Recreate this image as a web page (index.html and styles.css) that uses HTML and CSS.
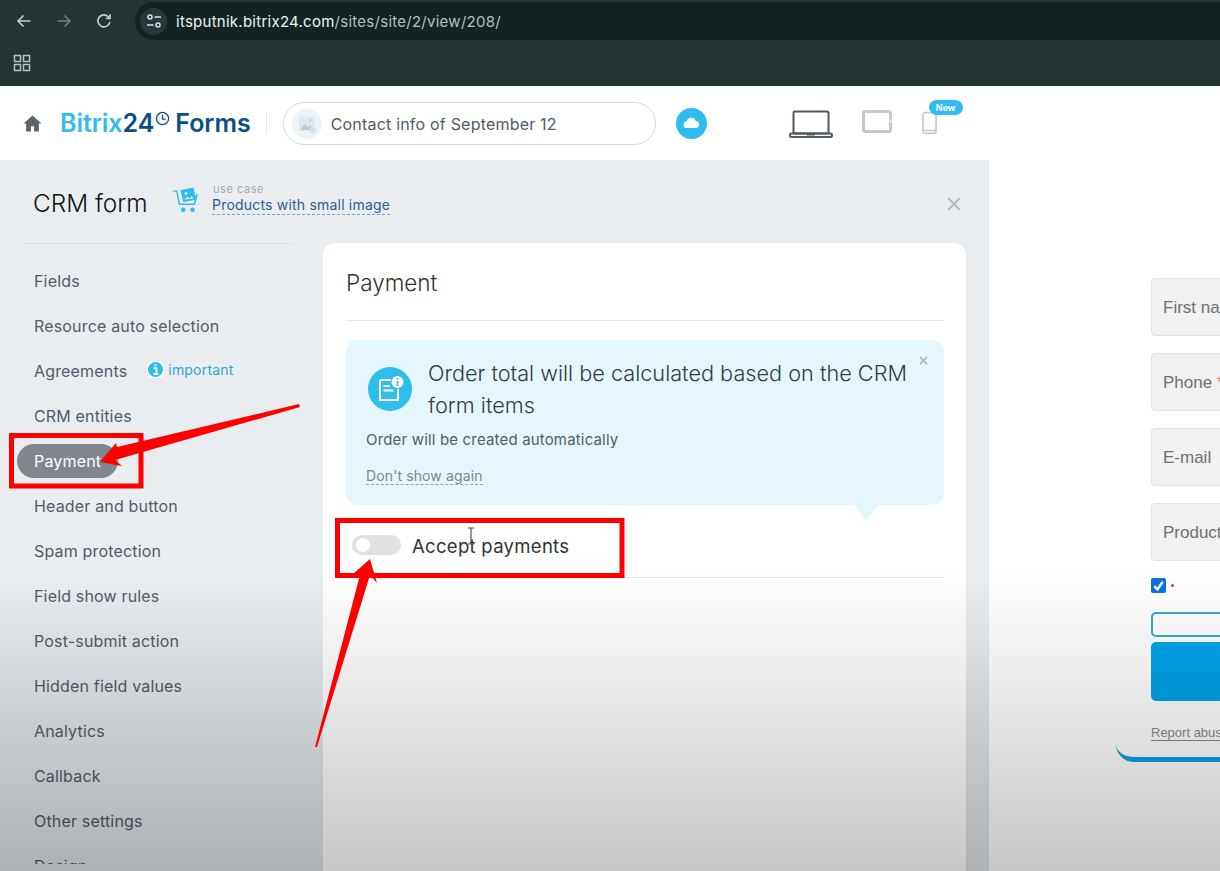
FILE: index.html
```html
<!DOCTYPE html>
<html lang="en">
<head>
<meta charset="utf-8">
<title>Bitrix24 Forms</title>
<link rel="stylesheet" href="styles.css">
</head>
<body>
<div class="page">
  <div class="browser">
    <div class="toolbar">
      <svg class="nav-icon" viewBox="0 0 18 18"><path d="M15.5 9H3M8.5 3.5 3 9l5.5 5.5"/></svg>
      <svg class="nav-icon dim" viewBox="0 0 18 18"><path d="M2.5 9H15M9.500 3.500 15 9l-5.500 5.500"/></svg>
      <svg class="nav-icon reload" viewBox="0 0 18 18"><path d="M14.800 9.800A6 6 0 1 1 13.300 4.800L15 6.500M15 2.300v4.200h-4.200"/></svg>
      <div class="omnibox">
        <span class="tune"><svg viewBox="0 0 18 18"><circle cx="5" cy="5" r="2"/><path d="M9.500 5H16M2 13h6.500"/><circle cx="13" cy="13" r="2"/></svg></span>
        <span class="url">itsputnik.bitrix24.com<span class="url-path">/sites/site/2/view/208/</span></span>
      </div>
    </div>
    <div class="bookmarks">
      <svg class="apps" viewBox="0 0 18 18"><rect x="1.500" y="1.500" width="6" height="6"/><rect x="10.500" y="1.500" width="6" height="6"/><rect x="1.500" y="10.500" width="6" height="6"/><rect x="10.500" y="10.500" width="6" height="6"/></svg>
    </div>
  </div>

  <header class="topbar">
    <svg class="home" viewBox="0 0 18 18"><path d="M9 1.500 0.500 9H3v7.500h4.500v-5h3v5H15V9h2.500z"/></svg>
    <div class="logo"><span class="logo-a">Bitrix</span><span class="logo-b">24</span><svg class="logo-clock" viewBox="0 0 14 14"><circle cx="7" cy="7" r="5.700"/><path d="M7 3.500V7.500h3"/></svg><span class="logo-b logo-forms">Forms</span></div>
    <span class="sep"></span>
    <div class="name-pill">
      <span class="thumb"><svg viewBox="0 0 20 20"><rect x="2" y="2" width="15" height="15" fill="#dde9ee"/><path d="M3 16l5-6 3 3 2-2 4 5z" fill="#bccbd2"/><circle cx="13" cy="6" r="1.200" fill="#bccbd2"/><circle cx="16" cy="16" r="3" fill="#cfe0e6"/></svg></span>
      <span>Contact info of September 12</span>
    </div>
    <span class="cloud"><svg viewBox="0 0 20 14"><path d="M5 13a4 4 0 0 1-.5-8A5.500 5.500 0 0 1 15 4.500 4.300 4.300 0 0 1 15.500 13z"/></svg></span>
    <div class="devices">
      <svg class="laptop" viewBox="0 0 44 28"><rect x="4.500" y="1.500" width="35" height="22" rx="1.500"/><rect x="1" y="23.500" width="42" height="3.500" rx="1.500"/><path d="M18 24.500h8" /></svg>
      <svg class="tablet" viewBox="0 0 30 23"><rect x="1.500" y="1.500" width="27" height="20" rx="1.500"/><circle cx="28.500" cy="11.500" r="1" class="solid"/></svg>
      <span class="phone-wrap">
        <svg class="phone" viewBox="0 0 16 24"><rect x="1" y="1" width="14" height="22" rx="2"/><path d="M1 20h14"/></svg>
        <span class="new-badge">New</span>
      </span>
    </div>
  </header>

  <main class="workspace">
    <section class="editor">
      <div class="editor-head">
        <h1 class="editor-title">CRM form</h1>
        <svg class="cart" viewBox="0 0 30 28"><path d="M1 4h4l3 14h16l3-11" class="cart-line"/><path d="M9 3l14-3 3 13-14 3z" class="cart-fill"/><circle cx="12" cy="24" r="2.500" class="cart-fill"/><circle cx="22" cy="24" r="2.500" class="cart-fill"/><path d="M13 13l4-3 2 2 2-3 2 3z" fill="#e9edf0"/><circle cx="15" cy="6.500" r="1.500" fill="#e9edf0"/></svg>
        <div class="use-case">
          <span class="use-case-label">use case</span>
          <span class="use-case-link">Products with small image</span>
        </div>
        <svg class="close" viewBox="0 0 14 14"><path d="M1 1l12 12M13 1 1 13"/></svg>
      </div>
      <div class="editor-body">
        <nav class="menu">
          <div class="menu-item">Fields</div>
          <div class="menu-item">Resource auto selection</div>
          <div class="menu-item">Agreements
            <span class="important"><svg viewBox="0 0 18 18"><circle cx="9" cy="9" r="9"/><path d="M7 7.500h3v6M7 13.800h5M8 4.500h2"/></svg>important</span>
          </div>
          <div class="menu-item">CRM entities</div>
          <div class="menu-item"><span class="menu-active">Payment</span></div>
          <div class="menu-item">Header and button</div>
          <div class="menu-item">Spam protection</div>
          <div class="menu-item">Field show rules</div>
          <div class="menu-item">Post-submit action</div>
          <div class="menu-item">Hidden field values</div>
          <div class="menu-item">Analytics</div>
          <div class="menu-item">Callback</div>
          <div class="menu-item">Other settings</div>
          <div class="menu-item">Design</div>
        </nav>
        <section class="card">
          <h2 class="card-title">Payment</h2>
          <div class="notice">
            <svg class="notice-close" viewBox="0 0 10 10"><path d="M1 1l8 8M9 1 1 9"/></svg>
            <div class="notice-top">
              <svg class="notice-icon" viewBox="0 0 44 44"><circle cx="22" cy="22" r="22" class="ni-bg"/><path d="M12 13h11M12 13v20h18V22M15.500 19h6M15.500 23.500h10" class="ni-line"/><circle cx="29.500" cy="15" r="6" class="ni-dot"/><path d="M29.500 14v5M29.500 11v1.600" class="ni-i"/></svg>
              <p class="notice-title">Order total will be calculated based on the CRM form items</p>
            </div>
            <p class="notice-sub">Order will be created automatically</p>
            <span class="notice-link">Don't show again</span>
          </div>
          <div class="toggle-row">
            <span class="toggle"><span class="knob"></span></span>
            <span class="toggle-label">Accept payments</span>
          </div>
        </section>
      </div>
    </section>

    <section class="preview">
      <div class="form">
        <div class="field">First name</div>
        <div class="field">Phone <span class="req">*</span></div>
        <div class="field">E-mail</div>
        <div class="field">Product</div>
        <div class="check-row">
          <span class="check"><svg viewBox="0 0 14 14"><path d="M3 7.500l3 3 5-7"/></svg></span>
          <span class="req-dot"></span>
        </div>
        <div class="outline-input"></div>
        <div class="submit"></div>
        <span class="report">Report abuse</span>
      </div>
    </section>

    <div class="shade"></div>
  </main>

  <svg class="annot" viewBox="0 0 1220 871">
    <rect x="11.500" y="435.500" width="129.500" height="50.500"/>
    <rect x="337.500" y="520.500" width="284.500" height="55"/>
    <polygon class="arrow" points="299,404 300,407 115,460 122,466 100,462 116,443 117,447"/>
    <polygon class="arrow" points="370,559 372,566 377,583 370,575 317,747 315,747 360,575 353,574"/>
  </svg>
  <svg class="ibeam" viewBox="0 0 8 18"><path d="M1 1h6M4 1v16M1 17h6"/></svg>
</div>
</body>
</html>
```

FILE: styles.css
```css
* { box-sizing: border-box; }
html, body { margin: 0; height: 100%; overflow: hidden; }
body { font-family: Inter, "Liberation Sans", sans-serif; color: #525c69; }
h1, h2, p { margin: 0; font-weight: 400; }

.page { position: relative; width: 1220px; height: 871px; overflow: hidden; background: #fff; }

/* browser chrome */
.browser { height: 86px; background: #203534; color: #e4ecea; }
.toolbar { height: 41px; display: flex; align-items: center; padding: 1px 0 0 15px; gap: 22px; }
.nav-icon { width: 18px; height: 18px; fill: none; stroke: #c3d0cd; stroke-width: 1.600; flex: none; }
.nav-icon.dim { stroke: #6f817e; }
.omnibox { flex: 1; height: 38px; background: #122322; border-radius: 19px 0 0 19px; display: flex; align-items: center; padding-left: 5px; }
.tune { width: 27px; height: 27px; border-radius: 50%; background: #26393a; display: flex; align-items: center; justify-content: center; }
.tune svg { width: 18px; height: 18px; fill: none; stroke: #d8e2e0; stroke-width: 1.500; }
.url { margin-left: 9px; font-size: 15px; letter-spacing: .26px; color: #eef3f2; }
.url-path { color: #b3c0be; }
.bookmarks { height: 45px; padding: 13px 0 0 13px; }
.apps { width: 18px; height: 18px; fill: none; stroke: #b5c4c1; stroke-width: 1.500; display: block; }

/* top bar */
.topbar { height: 74px; background: #fff; display: flex; align-items: center; padding-left: 23px; }
.home { width: 19px; height: 19px; fill: #5b636b; flex: none; }
.logo { margin-left: 18px; font-size: 25px; font-weight: 600; display: flex; align-items: center; letter-spacing: -.04px; }
.logo-a { color: #2fbdec; }
.logo-b { color: #0c4f84; }
.logo-forms { margin-left: 5px; }
.logo-clock { width: 15px; height: 15px; margin: -9px 0 0 1px; fill: none; stroke: #0c4f84; stroke-width: 1.200; }
.sep { width: 1px; height: 22px; background: #e4e7ea; margin-left: 15px; }
.name-pill { margin: 1px 0 0 16px; width: 373px; height: 43px; border: 1px solid #d5d8da; border-radius: 22px; display: flex; align-items: center; padding-left: 8px; gap: 9px; font-size: 16px; letter-spacing: .2px; color: #525c69; }
.thumb { width: 30px; height: 30px; border-radius: 50%; background: #eaf4f7; display: flex; align-items: center; justify-content: center; }
.thumb svg { width: 20px; height: 20px; }
.cloud { margin-left: 20px; width: 31px; height: 31px; border-radius: 50%; background: #2fbdf0; display: flex; align-items: center; justify-content: center; }
.cloud svg { width: 17px; height: 12px; fill: #fff; }
.devices { margin-left: 82px; display: flex; align-items: center; gap: 29px; }
.laptop { width: 44px; height: 28px; margin-top: 1px; fill: none; stroke: #4f5860; stroke-width: 2; }
.tablet { width: 30px; height: 23px; fill: none; stroke: #c6c9cc; stroke-width: 3; margin-top: -3px; }
.tablet .solid { fill: #fff; stroke: none; }
.phone-wrap { position: relative; display: flex; margin-left: 1px; }
.phone { width: 15px; height: 24px; fill: none; stroke: #c6c9cc; stroke-width: 1.800; }
.new-badge { position: absolute; left: 7px; top: -11px; width: 34px; height: 15px; border-radius: 8px; background: #2fbdf0; color: #fff; font-size: 9px; font-weight: 700; display: flex; align-items: center; justify-content: center; }

/* workspace */
.workspace { position: relative; height: 711px; display: flex; overflow: hidden; }
.editor { width: 989px; flex: none; background: linear-gradient(#e9edf0 60%, #dfe3e6); display: flex; flex-direction: column; }
.editor-head { height: 83px; flex: none; display: flex; align-items: flex-start; padding: 25px 28px 0 33px; }
.editor-title { font-size: 24.400px; line-height: 36px; color: #111; font-weight: 300; width: 139px; flex: none; }
.cart { width: 28px; height: 27px; margin-top: 2px; flex: none; }
.cart-line { fill: none; stroke: #2fbdec; stroke-width: 1.500; }
.cart-fill { fill: #2fbdec; }
.use-case { margin-left: 12px; display: flex; flex-direction: column; margin-top: -2px; }
.use-case-label { font-size: 11px; line-height: 13px; color: #a3a9ae; letter-spacing: .55px; margin-left: 1px; }
.use-case-link { font-size: 14px; line-height: 18px; margin-top: 0; color: #2a5d92; border-bottom: 1px dashed #7da0c2; letter-spacing: .2px; }
.close { width: 14px; height: 14px; margin: 12px 0 0 auto; fill: none; stroke: #b4bbc1; stroke-width: 2; }
.editor-body { flex: 1; display: flex; min-height: 0; }

.menu { width: 323px; height: 621px; overflow: hidden; flex: none; padding-left: 34px; }
.menu::before { content: ""; display: block; width: 272px; height: 1px; margin: 0 0 14px -12px; background: #dcdfe2; }
.menu-item { height: 45px; display: flex; align-items: center; font-size: 16px; letter-spacing: .17px; color: #525c69; }
.important { display: inline-flex; align-items: center; gap: 4px; margin: -2px 0 0 20px; font-size: 14px; letter-spacing: .2px; color: #2fa9d0; }
.important svg { width: 17px; height: 17px; fill: #2fbdf0; stroke: #fff; stroke-width: 2; }
.menu-active { margin-left: -17px; padding: 0 17px; height: 34px; border-radius: 17px; background: #7f868d; color: #fff; display: flex; align-items: center; }

.card { width: 643px; flex: none; background: #fff; border-radius: 12px 12px 0 0; padding: 0 22px 0 23px; }
.card-title { font-size: 22.500px; line-height: 30px; color: #333; font-weight: 300; padding-top: 25px; height: 78px; border-bottom: 1px solid #e4e7e9; }
.notice { position: relative; margin-top: 19px; height: 165px; background: #e5f7fd; border-radius: 12px; padding: 17px 20px 0 20px; }
.notice::after { content: ""; position: absolute; left: 508px; bottom: -16px; border: solid transparent; border-width: 16px 12px 0; border-top-color: #e5f7fd; }
.notice-close { position: absolute; right: 16px; top: 16px; width: 9px; height: 9px; fill: none; stroke: #a9bcc4; stroke-width: 2; }
.notice-top { display: flex; align-items: center; gap: 16px; padding-left: 2px; }
.notice-icon { width: 44px; height: 44px; flex: none; }
.ni-bg { fill: #2fbdec; }
.ni-line { fill: none; stroke: #fff; stroke-width: 2; }
.ni-dot { fill: #fff; }
.ni-i { stroke: #2fbdec; stroke-width: 1.800; fill: none; }
.notice-title { font-size: 21.700px; line-height: 32px; color: #333c42; font-weight: 300; width: 495px; }
.notice-sub { font-size: 15px; line-height: 20px; margin-top: 9px; letter-spacing: .17px; color: #525c69; }
.notice-link { display: inline-block; font-size: 14px; line-height: 17px; margin-top: 17px; letter-spacing: .12px; color: #7d8891; border-bottom: 1px dashed #98a2aa; }
.toggle-row { height: 73px; border-bottom: 1px solid #e4e7e9; display: flex; align-items: center; padding: 8px 0 0 6px; gap: 11px; }
.toggle { width: 49px; height: 20px; border-radius: 10px; background: #dfe1e3; display: flex; align-items: center; padding-left: 4px; }
.knob { width: 14px; height: 14px; border-radius: 50%; background: #fff; }
.toggle-label { font-size: 18.500px; letter-spacing: .3px; color: #333; padding-top: 2px; }

/* preview */
.preview { flex: 1; background: #fff; padding-left: 127px; min-width: 0; overflow: hidden; }
.form { width: 300px; height: 602px; padding: 118px 0 0 35px; border-bottom: 5px solid #0aa0e6; border-radius: 0 0 0 18px; font-family: "Liberation Sans", Arial, sans-serif; }
.field { height: 58px; margin-bottom: 17px; padding: 2px 0 0 11px; display: flex; align-items: center; gap: 5px; background: #f0f1f1; border: 1px solid #e0e2e3; border-radius: 4px; font-size: 17px; color: #707070; white-space: nowrap; width: 265px; }
.req { color: #e05a5a; }
.check-row { display: flex; align-items: center; gap: 5px; margin-top: 1px; height: 15px; }
.check { width: 15px; height: 15px; background: #0b6fe8; border-radius: 2px; display: flex; }
.check svg { width: 15px; height: 15px; fill: none; stroke: #fff; stroke-width: 2.300; }
.req-dot { width: 3px; height: 3px; border-radius: 50%; background: #d33; }
.outline-input { margin-top: 19px; width: 265px; height: 25px; border: 2px solid #3aa9c8; border-radius: 5px; }
.submit { margin-top: 5px; width: 265px; height: 59px; background: #00a4ea; border-radius: 5px; }
.report { display: inline-block; margin-top: 24px; font-size: 13px; line-height: 15px; color: #8a8a8a; border-bottom: 1px solid #8a8a8a; white-space: nowrap; }

/* video fade and annotations */
.shade { position: absolute; left: 0; right: 0; bottom: 0; height: 301px; background: linear-gradient(rgba(0,0,0,0), rgba(0,0,0,.22)); pointer-events: none; }
.annot { position: absolute; inset: 0; width: 1220px; height: 871px; pointer-events: none; }
.annot rect { fill: none; stroke: #fe0000; stroke-width: 5; }
.arrow { fill: #fe0000; }
.ibeam { position: absolute; left: 467px; top: 527px; width: 8px; height: 18px; fill: none; stroke: #555; stroke-width: 1.200; }
```
